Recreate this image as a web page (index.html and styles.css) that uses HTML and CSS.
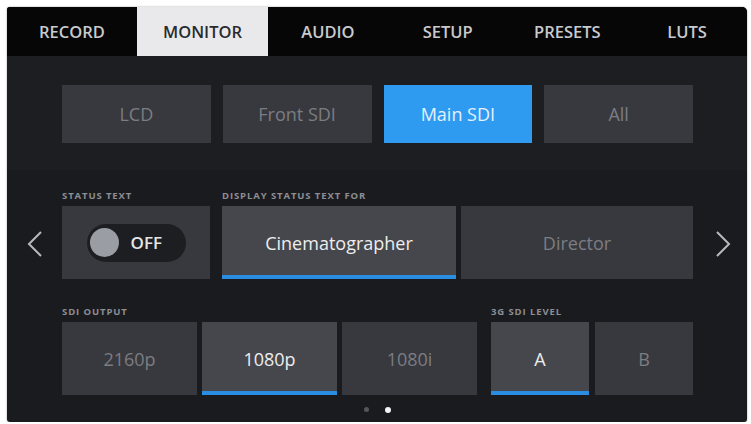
FILE: index.html
```html
<!DOCTYPE html>
<html lang="en">
<head>
    <meta charset="UTF-8">
    <meta name="viewport" content="width=device-width, initial-scale=1.0">
    <title>Monitor</title>
    <link rel="stylesheet" href="styles.css">
</head>
<body>

    <div class="screen">
        <div class="tabs">
            <div class="tab">RECORD</div>
            <div class="tab active">MONITOR</div>
            <div class="tab">AUDIO</div>
            <div class="tab">SETUP</div>
            <div class="tab">PRESETS</div>
            <div class="tab">LUTS</div>
        </div>

        <div class="sources">
            <div class="btn">LCD</div>
            <div class="btn">Front SDI</div>
            <div class="btn blue">Main SDI</div>
            <div class="btn">All</div>
        </div>

        <div class="settings">
            <div class="arrow">
                <svg width="16" height="26" viewBox="0 0 16 26"><polyline points="14,1 2,13 14,25" fill="none" stroke="#b9babe" stroke-width="2"/></svg>
            </div>

            <div class="group status-group">
                <div class="label">STATUS TEXT</div>
                <div class="btn status-box">
                    <div class="toggle">
                        <span class="knob"></span>
                        <span class="toggle-text">OFF</span>
                    </div>
                </div>
            </div>

            <div class="group display-group">
                <div class="label">DISPLAY STATUS TEXT FOR</div>
                <div class="row two">
                    <div class="btn selected">Cinematographer</div>
                    <div class="btn">Director</div>
                </div>
            </div>

            <div class="arrow right">
                <svg width="16" height="26" viewBox="0 0 16 26"><polyline points="2,1 14,13 2,25" fill="none" stroke="#b9babe" stroke-width="2"/></svg>
            </div>
        </div>

        <div class="outputs">
            <div class="group output-group">
                <div class="label">SDI OUTPUT</div>
                <div class="row three">
                    <div class="btn">2160p</div>
                    <div class="btn selected">1080p</div>
                    <div class="btn">1080i</div>
                </div>
            </div>
            <div class="group level-group">
                <div class="label">3G SDI LEVEL</div>
                <div class="row level">
                    <div class="btn selected">A</div>
                    <div class="btn">B</div>
                </div>
            </div>
        </div>

        <div class="dots">
            <span class="dot"></span>
            <span class="dot on"></span>
        </div>
    </div>

</body>
</html>
```

FILE: styles.css
```css
body {
    margin: 0;
    background: #ffffff;
    font-family: "Open Sans", "Noto Sans", sans-serif;
}

.screen {
    width: 740px;
    height: 415px;
    margin: 7px 0 0 7px;
    background: #1a1b1f;
    border-radius: 3px 5px 3px 3px;
    overflow: hidden;
    box-shadow: 0 0 2px rgba(0, 0, 0, 0.4);
}

.tabs {
    display: grid;
    grid-template-columns: 130px 131px repeat(4, 1fr);
    height: 49px;
    background: #060607;
}

.tab {
    display: flex;
    align-items: center;
    justify-content: center;
    color: #c9cacd;
    font-size: 16.5px;
    font-weight: 600;
}

.tab.active {
    background: #e9e9eb;
    color: #2a2b2f;
}

.sources {
    display: grid;
    grid-template-columns: repeat(4, 1fr);
    gap: 12px;
    height: 58px;
    padding: 29px 54px 27px 55px;
    background: #1d1e22;
}

.btn {
    display: flex;
    align-items: center;
    justify-content: center;
    background: #38393e;
    color: #7c7d82;
    font-size: 18px;
}

.btn.blue {
    background: #2e9af0;
    color: #e4f1ff;
}

.btn.selected {
    background: #46474c;
    color: #ededee;
    box-shadow: inset 0 -4px #2b8de2;
}

.settings {
    display: flex;
    padding-top: 20px;
}

.arrow {
    flex: 0 0 55px;
    display: flex;
    align-items: center;
    justify-content: center;
    padding-top: 18px;
}

.arrow.right {
    flex-basis: 54px;
    justify-content: flex-end;
    padding-right: 16px;
    box-sizing: border-box;
}

.group {
    display: flex;
    flex-direction: column;
}

.label {
    height: 12px;
    line-height: 12px;
    margin-bottom: 4px;
    color: #8d8e93;
    font-size: 9.5px;
    font-weight: 700;
    letter-spacing: 0.9px;
    white-space: nowrap;
}

.status-group {
    width: 148px;
    margin-right: 12px;
}

.display-group {
    width: 471px;
}

.status-box {
    height: 73px;
}

.toggle {
    display: flex;
    align-items: center;
    width: 99px;
    height: 38px;
    border-radius: 19px;
    background: #1d1e22;
}

.knob {
    width: 29px;
    height: 29px;
    margin-left: 3px;
    border-radius: 50%;
    background: #9b9da4;
}

.toggle-text {
    margin-left: 12px;
    color: #e6e6e8;
    font-size: 17px;
    font-weight: 600;
}

.row {
    display: grid;
    height: 73px;
}

.row.two {
    grid-template-columns: 234px 1fr;
    gap: 5px;
}

.outputs {
    display: flex;
    gap: 14px;
    padding: 27px 0 0 55px;
}

.output-group {
    width: 415px;
}

.level-group {
    width: 202px;
}

.row.three {
    grid-template-columns: repeat(3, 1fr);
    gap: 5px;
}

.row.level {
    grid-template-columns: 1fr 1fr;
    gap: 6px;
}

.dots {
    display: flex;
    justify-content: center;
    gap: 16px;
    margin-top: 12px;
}

.dot {
    width: 5px;
    height: 5px;
    border-radius: 50%;
    background: #55565b;
}

.dot.on {
    width: 6px;
    height: 6px;
    background: #f4f4f5;
}
```
